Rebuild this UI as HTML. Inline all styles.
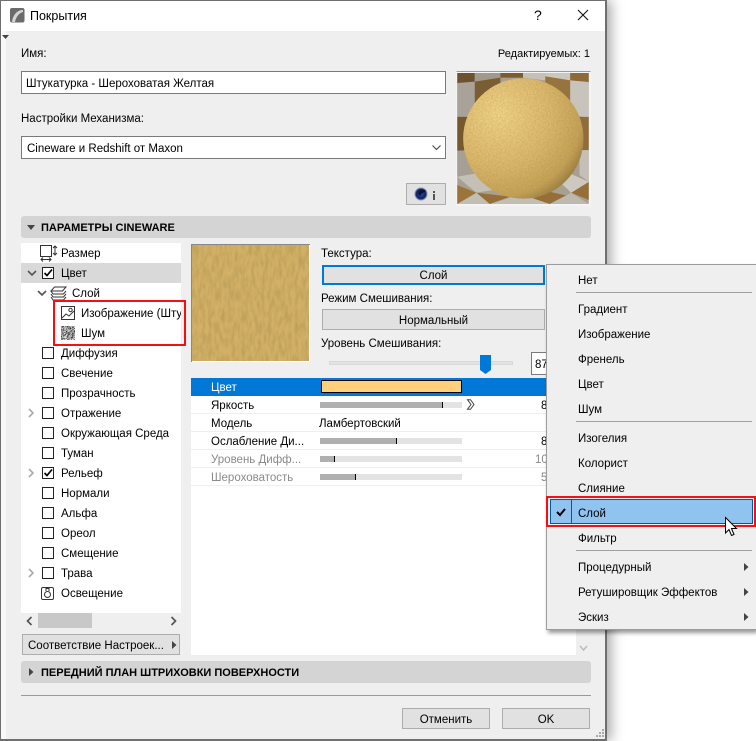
<!DOCTYPE html>
<html lang="ru"><head><meta charset="utf-8"><title>Покрытия</title>
<style>
html,body{margin:0;padding:0;background:#fff}
body{width:756px;height:741px;position:relative;overflow:hidden;font-family:"Liberation Sans",sans-serif;font-size:11.5px;color:#000}
.a{position:absolute;box-sizing:border-box}
.a .t{margin-top:0}
.t{position:absolute;white-space:nowrap;line-height:16px;height:16px;margin-top:1px}
.cb{position:absolute;left:42px;width:12px;height:12px;border:1px solid #222;background:#fff;box-sizing:border-box}
.line{position:absolute;height:1px;background:#a0a0a0;left:576px;width:176px}
.ln{position:absolute;left:191px;width:356px;height:1px;background:#efefef}
.track{position:absolute;left:320px;width:142px;height:6px;background:#e3e3e3}
.track i{position:absolute;left:0;top:0;height:6px;background:#b0b0b0;border-right:1px solid #000}
svg{position:absolute;overflow:visible}
</style></head><body>

<div class="a" style="left:0;top:0;width:607px;height:741px;box-shadow:4px 0 12px rgba(0,0,0,.35)"></div>
<div class="a" style="left:0;top:0;width:607px;height:741px;background:#efefef;border:1px solid #6f6f6f;border-width:1px 2px 2px 1px"></div>
<div class="a" style="left:1px;top:1px;width:604px;height:30px;background:#fff"></div>
<div class="a" style="left:1px;top:31px;width:5px;height:708px;background:#f8f8f8"></div>
<svg style="left:2px;top:35px" width="8" height="5"><path d="M0 0H7L3.5 4Z" fill="#444"/></svg>

<svg style="left:10px;top:8px" width="15" height="15"><rect width="14.5" height="14.5" rx="2" fill="#6b6b6b"/><path d="M2 14C3 7 7 2 13 2V4C9 5 6 9 5 14Z" fill="#d5d5d5"/></svg>
<div class="t" style="left:30px;top:8px;font-size:12.500px;margin-top:0">Покрытия</div>
<div class="t" style="left:534px;top:7px;font-size:14px;margin-top:0">?</div>
<svg style="left:577px;top:9px" width="12" height="12"><path d="M1 1L11 11M11 1L1 11" stroke="#111" stroke-width="1.1" fill="none"/></svg>

<div class="t" style="left:21px;top:45px">Имя:</div>
<div class="t" style="right:166px;top:45px;font-size:11px">Редактируемых: 1</div>
<div class="a" style="left:21px;top:71px;width:425px;height:23px;background:#fff;border:1px solid #7a7a7a"></div>
<div class="t" style="left:26px;top:75px">Штукатурка - Шероховатая Желтая</div>
<div class="t" style="left:21px;top:110px">Настройки Механизма:</div>
<div class="a" style="left:21px;top:136px;width:425px;height:23px;background:#fff;border:1px solid #7a7a7a"></div>
<div class="t" style="left:27px;top:140px">Cineware и Redshift от Maxon</div>
<svg style="left:432px;top:145px" width="10" height="6"><path d="M.5 .5L4.5 4.5L8.5 .5" stroke="#444" stroke-width="1.1" fill="none"/></svg>

<div class="a" style="left:406px;top:183px;width:40px;height:22px;background:#e1e1e1;border:1px solid #adadad"></div>
<svg style="left:414px;top:187px" width="14" height="14"><defs><radialGradient id="c4"><stop offset="0" stop-color="#2a4fb0"/><stop offset=".7" stop-color="#10205f"/><stop offset="1" stop-color="#cfd3e0"/></radialGradient></defs><circle cx="7" cy="7" r="6.8" fill="url(#c4)"/><path d="M4 6C6 2 10 2 12 4C10 5 8 6 6 9Z" fill="#0a1238"/></svg>
<div class="a" style="left:433px;top:191px;width:2px;height:2px;background:#555"></div>
<div class="a" style="left:433px;top:194px;width:2px;height:6px;background:#555"></div>

<div class="a" style="left:456px;top:71px;width:135px;height:135px;background:#f4f4f4;border:1px solid #f4f4f4;border-top-color:#999"></div>
<svg style="left:457px;top:73px" width="132" height="131" viewBox="232 218 396 394">
<defs>
<radialGradient id="sp" cx=".3" cy=".3" r=".85"><stop offset="0" stop-color="#f2d588"/><stop offset=".5" stop-color="#dcb96c"/><stop offset=".8" stop-color="#c6a256"/><stop offset="1" stop-color="#806a34"/></radialGradient>
<filter id="nz" x="0" y="0" width="100%" height="100%"><feTurbulence type="fractalNoise" baseFrequency=".2" numOctaves="3" seed="4"/><feColorMatrix values="0 0 0 0 .3 0 0 0 0 .2 0 0 0 0 .06 .55 0 0 0 -.18"/><feComposite in2="SourceAlpha" operator="in"/></filter>
<clipPath id="pc"><rect x="232" y="218" width="396" height="394"/></clipPath>
</defs>
<g clip-path="url(#pc)">
<rect x="232" y="218" width="396" height="394" fill="#a89f90"/>
<path d="M232 218H285V245L232 250Z" fill="#6e5230"/>
<path d="M285 218H362V235L285 245Z" fill="#a09a8d"/>
<path d="M362 218H430V232H362Z" fill="#7a5c33"/>
<path d="M430 218H497V240L430 232Z" fill="#c5c1b8"/>
<path d="M497 218H572V240L497 228Z" fill="#cbc7bd"/>
<path d="M572 218H628V250L572 240Z" fill="#8d6a38"/>
<path d="M232 248L285 244V345L232 350Z" fill="#a8a298"/>
<path d="M285 244L362 232V300L285 345Z" fill="#7b5d33"/>
<path d="M497 228L572 240V345L497 300Z" fill="#97733e"/>
<path d="M572 240L628 245V352L572 345Z" fill="#c8c4bc"/>
<path d="M232 350H262V450L232 452Z" fill="#76582f"/>
<path d="M600 350H628V450H600Z" fill="#8f6c39"/>
<path d="M232 452H262V525L232 530Z" fill="#a5a096"/>
<path d="M600 450H628V545L600 525Z" fill="#c4c0b7"/>
<path d="M232 530L290 520L340 570L290 578Z" fill="#c4c0b6"/>
<path d="M232 555L290 578L240 612H232Z" fill="#9a743a"/>
<path d="M290 578L350 585L390 590L330 612H290Z" fill="#966f38"/>
<path d="M460 595L510 575L575 590L510 612Z" fill="#966f38"/>
<path d="M575 578L628 545V600Z" fill="#966f38"/>
<path d="M232 612L290 578L330 612Z" fill="#c2beb3"/>
<path d="M330 612L400 590L460 595L510 612Z" fill="#c2beb3"/>
<path d="M510 612L575 578L628 612Z" fill="#bdb9ae"/>
<path d="M540 545L575 522L628 545L575 578Z" fill="#cdc9c0"/>
<circle cx="431" cy="415" r="181" fill="url(#sp)"/>
<circle cx="431" cy="415" r="181" fill="#000" filter="url(#nz)"/>
</g></svg>

<div class="a" style="left:21px;top:216px;width:570px;height:22px;background:#d4d4d4;border-radius:3px"></div>
<svg style="left:27px;top:225px" width="9" height="6"><path d="M0 0H8L4 5Z" fill="#444"/></svg>
<div class="t" style="left:41px;top:219px;font-weight:bold;font-size:11px">ПАРАМЕТРЫ CINEWARE</div>

<!-- tree -->
<div class="a" style="left:21px;top:243px;width:160px;height:370px;background:#fff"></div>
<div class="a" style="left:21px;top:263px;width:160px;height:20px;background:#d9d9d9"></div>
<svg style="left:40px;top:245px" width="18" height="16"><rect x=".5" y=".5" width="11" height="11" fill="#fff" stroke="#333"/><path d="M15 1V10M13 3L15 1L17 3M13 8L15 10L17 8M1 14.5H11M3 12.5L1 14.5L3 16.5M9 12.5L11 14.5L9 16.5" stroke="#333" fill="none"/></svg>
<div class="t" style="left:61px;top:245px">Размер</div>
<svg style="left:27px;top:270px" width="10" height="7"><path d="M1 1L5 5L9 1" stroke="#555" stroke-width="1.6" fill="none"/></svg>
<div class="cb" style="top:267px"></div>
<svg style="left:42px;top:267px" width="12" height="12"><path d="M2.5 6L5 8.5L10 2.5" stroke="#000" stroke-width="1.7" fill="none"/></svg>
<div class="t" style="left:61px;top:265px">Цвет</div>
<svg style="left:37px;top:290px" width="10" height="7"><path d="M1 1L5 5L9 1" stroke="#555" stroke-width="1.6" fill="none"/></svg>
<svg style="left:50px;top:286px" width="17" height="15"><path d="M4.500 1H16L12.500 5H1ZM1 5L3 8H13.500L16 5M1 8L3 11H13.500L16 8M1 11L3 14H13.500L16 11" stroke="#333" fill="none"/></svg>
<div class="t" style="left:72px;top:285px">Слой</div>
<svg style="left:61px;top:306px" width="14" height="14"><rect x=".5" y=".5" width="13" height="13" fill="#fff" stroke="#333"/><path d="M1 12L5 8L8 10L13 5" stroke="#333" fill="none"/><circle cx="9.500" cy="4" r="1.700" fill="none" stroke="#333"/></svg>
<div class="a" style="left:81px;top:306px;width:100px;height:16px;overflow:hidden"><div class="t" style="left:0;top:0">Изображение (Штукатурка)</div></div>
<svg style="left:61px;top:326px" width="14" height="14"><defs><filter id="ns2" x="0" y="0" width="100%" height="100%"><feTurbulence type="turbulence" baseFrequency=".9" numOctaves="1" seed="3"/><feColorMatrix values="2.500 0 0 0 0 2.500 0 0 0 0 2.500 0 0 0 0 0 0 0 0 1"/></filter></defs><rect width="14" height="14" fill="#666" filter="url(#ns2)"/></svg>
<div class="t" style="left:81px;top:325px">Шум</div>
<div class="a" style="left:53px;top:300px;width:133px;height:46px;border:2px solid #f01018"></div>

<div class="cb" style="top:347px"></div><div class="t" style="left:61px;top:345px">Диффузия</div>
<div class="cb" style="top:367px"></div><div class="t" style="left:61px;top:365px">Свечение</div>
<div class="cb" style="top:387px"></div><div class="t" style="left:61px;top:385px">Прозрачность</div>
<svg style="left:28px;top:408px" width="7" height="10"><path d="M1 1L5 5L1 9" stroke="#aaa" stroke-width="1.6" fill="none"/></svg>
<div class="cb" style="top:407px"></div><div class="t" style="left:61px;top:405px">Отражение</div>
<div class="cb" style="top:427px"></div><div class="t" style="left:61px;top:425px">Окружающая Среда</div>
<div class="cb" style="top:447px"></div><div class="t" style="left:61px;top:445px">Туман</div>
<svg style="left:28px;top:468px" width="7" height="10"><path d="M1 1L5 5L1 9" stroke="#aaa" stroke-width="1.6" fill="none"/></svg>
<div class="cb" style="top:467px"></div>
<svg style="left:42px;top:467px" width="12" height="12"><path d="M2.5 6L5 8.500L10 2.500" stroke="#000" stroke-width="1.7" fill="none"/></svg>
<div class="t" style="left:61px;top:465px">Рельеф</div>
<div class="cb" style="top:487px"></div><div class="t" style="left:61px;top:485px">Нормали</div>
<div class="cb" style="top:507px"></div><div class="t" style="left:61px;top:505px">Альфа</div>
<div class="cb" style="top:527px"></div><div class="t" style="left:61px;top:525px">Ореол</div>
<div class="cb" style="top:547px"></div><div class="t" style="left:61px;top:545px">Смещение</div>
<svg style="left:28px;top:568px" width="7" height="10"><path d="M1 1L5 5L1 9" stroke="#aaa" stroke-width="1.6" fill="none"/></svg>
<div class="cb" style="top:567px"></div><div class="t" style="left:61px;top:565px">Трава</div>
<svg style="left:41px;top:586px" width="14" height="14"><rect x=".5" y="1.500" width="12" height="12" rx="1.500" fill="none" stroke="#333"/><circle cx="6.500" cy="8.500" r="3" fill="none" stroke="#333"/><path d="M5 5V2.500H8V5" fill="none" stroke="#333"/></svg>
<div class="t" style="left:61px;top:585px">Освещение</div>

<div class="a" style="left:38px;top:613px;width:54px;height:15px;background:#c8c8c8"></div>
<svg style="left:26px;top:616px" width="7" height="10"><path d="M5.500 1L1.500 5L5.500 9" stroke="#555" stroke-width="1.700" fill="none"/></svg>
<svg style="left:170px;top:616px" width="7" height="10"><path d="M1.500 1L5.500 5L1.500 9" stroke="#555" stroke-width="1.700" fill="none"/></svg>
<div class="a" style="left:22px;top:634px;width:158px;height:21px;background:#e1e1e1;border:1px solid #adadad"></div>
<div class="t" style="left:28px;top:637px">Соответствие Настроек...</div>
<svg style="left:172px;top:641px" width="6" height="8"><path d="M0 0L4.500 4L0 8Z" fill="#444"/></svg>

<!-- right panel -->
<div class="a" style="left:191px;top:378px;width:385px;height:277px;background:#fff"></div>
<div class="a" style="left:191px;top:244px;width:119px;height:118px;background:#fff;border-top:1px solid #888;border-left:1px solid #888"></div>
<svg style="left:192px;top:245px" width="117" height="116"><defs><filter id="tx" x="0" y="0" width="100%" height="100%"><feTurbulence type="fractalNoise" baseFrequency=".3 .09" numOctaves="3" seed="8"/><feColorMatrix values="0 0 0 0 .42 0 0 0 0 .29 0 0 0 0 .08 1.100 0 0 0 -.36"/><feComposite in2="SourceAlpha" operator="in"/></filter></defs><rect width="117" height="116" fill="#d2b066"/><rect width="117" height="116" filter="url(#tx)"/></svg>

<div class="t" style="left:321px;top:245px">Текстура:</div>
<div class="a" style="left:322px;top:265px;width:223px;height:20px;background:#e1e1e1;border:2px solid #0078d7"></div>
<div class="t" style="left:322px;width:223px;text-align:center;top:267px">Слой</div>
<div class="t" style="left:321px;top:290px">Режим Смешивания:</div>
<div class="a" style="left:322px;top:309px;width:223px;height:21px;background:#e1e1e1;border:1px solid #adadad"></div>
<div class="t" style="left:322px;width:223px;text-align:center;top:312px">Нормальный</div>
<div class="t" style="left:321px;top:335px">Уровень Смешивания:</div>
<div class="a" style="left:329px;top:361px;width:184px;height:4px;background:#e3e3e3;border:1px solid #d8d8d8"></div>
<svg style="left:480px;top:355px" width="11" height="19"><path d="M0 0H11V15L5.500 19L0 15Z" fill="#0078d7"/></svg>
<div class="a" style="left:531px;top:352px;width:30px;height:23px;background:#fff;border:1px solid #7a7a7a"></div>
<div class="t" style="left:535px;top:356px">87</div>

<div class="a" style="left:191px;top:378px;width:385px;height:18px;background:#0078d7"></div>
<div class="t" style="left:211px;top:379px;color:#fff">Цвет</div>
<div class="a" style="left:321px;top:380px;width:141px;height:13px;background:#ffcf79;border:1px solid #000"></div>

<div class="t" style="left:211px;top:397px">Яркость</div>
<div class="track" style="top:402px"><i style="width:122px"></i></div>
<svg style="left:466px;top:399px" width="9" height="11"><path d="M1.500 .7H4.500L8 5.500L4.500 10.300H1.500L5 5.500Z" fill="#fff" stroke="#444"/></svg>
<div class="t" style="left:541px;top:397px">88</div>
<div class="ln" style="top:413px"></div>
<div class="t" style="left:211px;top:415px">Модель</div>
<div class="t" style="left:319px;top:415px">Ламбертовский</div>
<div class="ln" style="top:431px"></div>
<div class="t" style="left:211px;top:433px">Ослабление Ди...</div>
<div class="track" style="top:438px"><i style="width:76px"></i></div>
<div class="t" style="left:541px;top:433px">80</div>
<div class="ln" style="top:449px"></div>
<div class="t" style="left:211px;top:451px;color:#8a8a8a">Уровень Дифф...</div>
<div class="track" style="top:456px"><i style="width:14px"></i></div>
<div class="t" style="left:535px;top:451px;color:#8a8a8a">10</div>
<div class="ln" style="top:467px"></div>
<div class="t" style="left:211px;top:469px;color:#8a8a8a">Шероховатость</div>
<div class="track" style="top:474px"><i style="width:35px"></i></div>
<div class="t" style="left:541px;top:469px;color:#8a8a8a">50</div>
<div class="ln" style="top:485px"></div>
<svg style="left:579px;top:645px" width="9" height="7"><path d="M1 1L4.500 5L8 1" stroke="#bbb" stroke-width="1.500" fill="none"/></svg>

<div class="a" style="left:21px;top:661px;width:570px;height:22px;background:#d4d4d4;border-radius:3px"></div>
<svg style="left:29px;top:668px" width="6" height="8"><path d="M0 0L4.500 4L0 8Z" fill="#444"/></svg>
<div class="t" style="left:41px;top:664px;font-weight:bold;font-size:11px">ПЕРЕДНИЙ ПЛАН ШТРИХОВКИ ПОВЕРХНОСТИ</div>
<div class="a" style="left:21px;top:695px;width:570px;height:1px;background:#999"></div>
<div class="a" style="left:402px;top:708px;width:88px;height:21px;background:#e1e1e1;border:1px solid #adadad"></div>
<div class="t" style="left:402px;width:88px;text-align:center;top:711px">Отменить</div>
<div class="a" style="left:502px;top:708px;width:88px;height:21px;background:#e1e1e1;border:1px solid #adadad"></div>
<div class="t" style="left:502px;width:88px;text-align:center;top:711px">OK</div>
<svg style="left:596px;top:729px" width="9" height="9"><g fill="#aaa"><rect x="6" y="0" width="2" height="2"/><rect x="3" y="3" width="2" height="2"/><rect x="6" y="3" width="2" height="2"/><rect x="0" y="6" width="2" height="2"/><rect x="3" y="6" width="2" height="2"/><rect x="6" y="6" width="2" height="2"/></g></svg>

<!-- menu -->
<div class="a" style="left:546px;top:264px;width:210px;height:366px;background:#efefef;border:1px solid #9c9c9c;border-right:0;box-shadow:2px 3px 4px rgba(0,0,0,.4)"></div>
<div class="t" style="left:578px;top:272px">Нет</div>
<div class="line" style="top:292px"></div>
<div class="t" style="left:578px;top:301px">Градиент</div>
<div class="t" style="left:578px;top:326px">Изображение</div>
<div class="t" style="left:578px;top:351px">Френель</div>
<div class="t" style="left:578px;top:376px">Цвет</div>
<div class="t" style="left:578px;top:401px">Шум</div>
<div class="line" style="top:421px"></div>
<div class="t" style="left:578px;top:430px">Изогелия</div>
<div class="t" style="left:578px;top:455px">Колорист</div>
<div class="t" style="left:578px;top:480px">Слияние</div>
<div class="a" style="left:550px;top:499px;width:203px;height:25px;background:#90c3f0;border:1px solid #005a9e"></div>
<div class="a" style="left:550px;top:499px;width:22px;height:25px;background:#90c3f0;border:1px solid #005a9e"></div>
<svg style="left:556px;top:508px" width="11" height="9"><path d="M1 4L4 7L9 1" stroke="#000" stroke-width="2" fill="none"/></svg>
<div class="t" style="left:578px;top:505px">Слой</div>
<div class="a" style="left:546px;top:496px;width:210px;height:31px;border:2px solid #f01018"></div>
<div class="t" style="left:578px;top:530px">Фильтр</div>
<div class="line" style="top:550px"></div>
<div class="t" style="left:578px;top:559px">Процедурный</div>
<svg style="left:744px;top:563px" width="5" height="8"><path d="M0 0L4.500 4L0 8Z" fill="#444"/></svg>
<div class="t" style="left:578px;top:584px">Ретушировщик Эффектов</div>
<svg style="left:744px;top:588px" width="5" height="8"><path d="M0 0L4.500 4L0 8Z" fill="#444"/></svg>
<div class="t" style="left:578px;top:609px">Эскиз</div>
<svg style="left:744px;top:613px" width="5" height="8"><path d="M0 0L4.500 4L0 8Z" fill="#444"/></svg>

<svg style="left:725px;top:517px" width="13" height="21"><path d="M.5 .5V16L4 12.500L6.500 18.500L9 17.500L6.500 11.500H11.500Z" fill="#fff" stroke="#000"/></svg>
</body></html>
